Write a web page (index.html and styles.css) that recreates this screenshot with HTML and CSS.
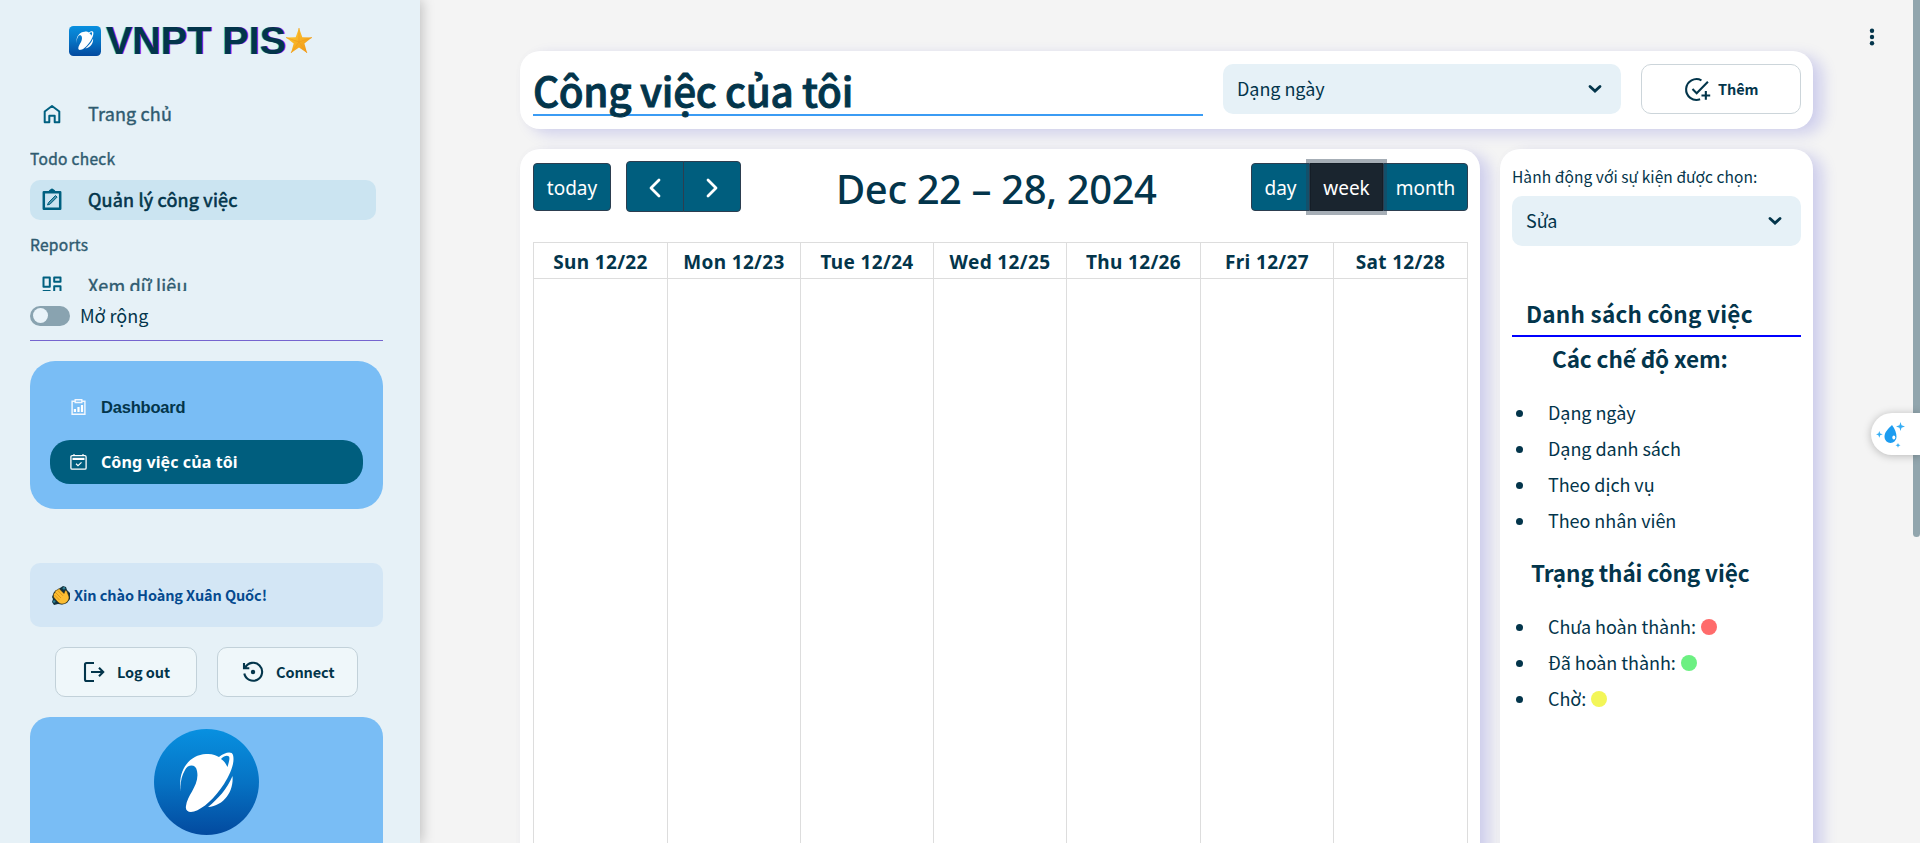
FILE: index.html
```html
<!DOCTYPE html>
<html lang="vi">
<head>
<meta charset="utf-8">
<title>VNPT PIS</title>
<link rel="stylesheet" href="styles.css">
</head>
<body>
<svg width="0" height="0" class="defs">
  <defs>
    <linearGradient id="blue" x1="0" y1="0" x2="0" y2="1"><stop offset="0" stop-color="#0890e0"/><stop offset=".5" stop-color="#0673c4"/><stop offset="1" stop-color="#034a9f"/></linearGradient>
    <linearGradient id="gold" x1="0" y1="0" x2="1" y2="1"><stop offset="0" stop-color="#ffd43a"/><stop offset="1" stop-color="#ef8f12"/></linearGradient>
    <symbol id="planet" viewBox="0 0 56 60">
      <path fill="#fff" d="M2 40C-2 20 9 3 27 2C33 1.500 37 3 40 5C46 0 53-1 54 3C56 10 52 21 45 32C36 46 24 57 15 59.500C10 61 6 59 7 54C8 43 21 33 18 19C17 12 9 12 6 18C2 25 1 32 2 40ZM42 7C46 10 47 12 48.500 15C50 10 51 6 50 4.500C48 3 45 4 42 7Z"/>
      <path fill="#fff" d="M53.500 24C55 39 45 54 29 55C39 47 48 37 53.500 24Z"/>
    </symbol>
  </defs>
</svg>
<div class="app">
  <aside class="sidebar">
    <div class="brand">
      <svg class="brand-logo" viewBox="0 0 32 30"><rect width="32" height="30" rx="4.500" fill="url(#blue)"/><use href="#planet" x="7" y="5" width="18" height="19"/></svg>
      <span class="brand-name">VNPT PIS</span>
      <svg class="brand-star" viewBox="0 0 26 26"><path fill="url(#gold)" d="M13 0l3.300 9.200 9.700.3-7.600 6 2.700 9.500-8.100-5.500L5 25l2.700-9.500L0 9.500l9.700-.3z"/><path fill="none" stroke="#f0a020" stroke-width=".8" d="M13 0v14M26 9.500L13 14M21 25l-8-11M5 25l8-11M0 9.500L13 14"/></svg>
    </div>
    <nav class="nav">
      <a class="nav-item">
        <svg class="ico" viewBox="0 0 24 24"><path d="M4.700 20.300V9.500L12 4l7.300 5.500v10.800h-4.600v-6.500H9.300v6.500z"/></svg>
        <span class="t-home">Trang chủ</span>
      </a>
      <div class="nav-label t-todo">Todo check</div>
      <a class="nav-item active">
        <svg class="ico bold" viewBox="0 0 24 24"><path d="M3.800 4.300h16.400v16.400H3.800zM9.500 3.500L12 1.800l2.500 1.700"/><path class="pen" d="M7.500 17l1-2.500 7-7 1.600 1.600-7 7z"/></svg>
        <span class="t-manage">Quản lý công việc</span>
      </a>
      <div class="nav-label t-reports">Reports</div>
      <a class="nav-item">
        <svg class="ico" viewBox="0 0 24 24"><path d="M3.500 3.500h6.300v9.300H3.500zM14.200 3.500h6.300v4.300h-6.300zM14.200 12.200h6.300v8.300h-6.300zM3.500 17h6.300v3.500H3.500z"/></svg>
        <span class="t-view">Xem dữ liệu</span>
      </a>
    </nav>
    <div class="expand"><span class="switch"></span><span class="t-expand">Mở rộng</span></div>
    <div class="menu">
      <a class="menu-item">
        <svg viewBox="0 0 16 16"><path fill="none" stroke="#f3f8fe" stroke-width="1.400" d="M4.500 2.200H1.600v13.100h12.800V2.200h-2.900M4.700.8h6.600v2.700H4.700z"/><path stroke="#fff" stroke-width="2.200" d="M4.400 13v-3M8 13V8M11.500 13V6"/></svg>
        <span class="t-dash">Dashboard</span>
      </a>
      <a class="menu-item selected">
        <svg viewBox="0 0 17 16"><rect x=".9" y="1.700" width="15.200" height="13.500" rx="1.200" fill="none" stroke="#fff" stroke-width="1.300"/><path fill="none" stroke="#fff" stroke-width="1.200" d="M4 0v2M13 0v2M6 9.800l2 1.900 3.500-3.300"/><path fill="#fff" d="M2.500 3.800h12v2.200h-12z"/></svg>
        <span class="t-mine">Công việc của tôi</span>
      </a>
    </div>
    <div class="greeting">
      <svg viewBox="0 0 18 19"><path fill="#12323f" d="M8 2l3-2 3 1 1 3 3 3v6l-3 4-5 1.500-4-.5-4 1L0 16l1-3-1-2 2-5z"/><path fill="#fbbd32" stroke="#3a2d10" stroke-width=".5" d="M1.500 8l1.500-1.500L3.500 4.500 5.500 4 7 2.500l5 5 1.500-3.500 1.500 1.500 2 5.500c0 4-3 7-7 7-3 0-5-3-8.500-7z"/><path stroke="#d98c12" stroke-width=".8" d="M3.500 6.500l5.500 5.500M5.800 4.500L11 9.800M2.500 9l5 5"/><circle cx="2.200" cy="15.500" r="1.300" fill="#2d8196"/><circle cx="12" cy="2.200" r="1.300" fill="#2d8196"/></svg>
      <span class="t-hello">Xin chào Hoàng Xuân Quốc!</span>
    </div>
    <div class="account">
      <button class="btn logout"><svg viewBox="0 0 24 24"><path d="M12 3H4.500Q3 3 3 4.500v15Q3 21 4.500 21H12M9 12h12M17 7.800l4.200 4.200-4.200 4.200"/></svg><span class="t-logout">Log out</span></button>
      <button class="btn connect"><svg viewBox="0 0 24 24"><path d="M4.200 7.500A9 9 0 1 1 3.300 13.500M3 3v5.200h5.300"/><circle cx="12" cy="12" r="2.200" class="dot"/></svg><span class="t-connect">Connect</span></button>
    </div>
    <div class="promo"><div class="planet-badge"><svg viewBox="0 0 56 60"><use href="#planet"/></svg></div></div>
  </aside>

  <main class="main">
    <header class="card head">
      <h1><span class="t-title">Công việc của tôi</span></h1>
      <div class="select"><span class="t-sel">Dạng ngày</span><svg viewBox="0 0 14 10"><path d="M2 2.500l5 4.600 5-4.600"/></svg></div>
      <button class="btn add"><svg viewBox="0 0 24 24"><path d="M15.800 3.200A10 10 0 1 0 14.500 21.400M7.200 11.500l4 4L22 4.500M20 13.500v8.400M15.800 17.700h8.400"/></svg><span class="t-add">Thêm</span></button>
    </header>
    <div class="columns">
      <section class="card calendar">
        <div class="toolbar">
          <div class="left">
            <button class="cal-btn today"><span class="t-today">today</span></button>
            <div class="arrows">
              <button class="cal-btn"><svg viewBox="0 0 14 20"><path d="M11 2L3 10l8 8"/></svg></button>
              <button class="cal-btn"><svg viewBox="0 0 14 20"><path d="M3 2l8 8-8 8"/></svg></button>
            </div>
          </div>
          <h2><span class="t-range">Dec 22 – 28, 2024</span></h2>
          <div class="views">
            <button class="cal-btn day"><span class="t-day">day</span></button>
            <button class="cal-btn week"><span class="t-week">week</span></button>
            <button class="cal-btn month"><span class="t-month">month</span></button>
          </div>
        </div>
        <div class="grid">
          <div class="col"><b>Sun 12/22</b></div><div class="col"><b>Mon 12/23</b></div><div class="col"><b>Tue 12/24</b></div><div class="col"><b>Wed 12/25</b></div><div class="col"><b>Thu 12/26</b></div><div class="col"><b>Fri 12/27</b></div><div class="col"><b>Sat 12/28</b></div>
        </div>
      </section>
      <section class="card side">
        <label><span class="t-label">Hành động với sự kiện được chọn:</span></label>
        <div class="select"><span class="t-edit">Sửa</span><svg viewBox="0 0 14 10"><path d="M2 2.500l5 4.600 5-4.600"/></svg></div>
        <h3 class="list-title"><span class="t-list">Danh sách công việc</span></h3>
        <h3 class="modes"><span class="t-modes">Các chế độ xem:</span></h3>
        <ul>
          <li><span>Dạng ngày</span></li>
          <li><span>Dạng danh sách</span></li>
          <li><span>Theo dịch vụ</span></li>
          <li><span>Theo nhân viên</span></li>
        </ul>
        <h3 class="status"><span class="t-status">Trạng thái công việc</span></h3>
        <ul>
          <li><span>Chưa hoàn thành:</span><i class="red"></i></li>
          <li><span>Đã hoàn thành:</span><i class="green"></i></li>
          <li><span>Chờ:</span><i class="yellow"></i></li>
        </ul>
      </section>
    </div>
  </main>
  <svg class="kebab" viewBox="0 0 6 18"><circle cx="3" cy="2.700" r="2.200"/><circle cx="3" cy="9" r="2.200"/><circle cx="3" cy="15.300" r="2.200"/></svg>
  <div class="scrollbar"></div>
  <div class="widget"><svg viewBox="0 0 30 26"><path fill="#1c9cf0" d="M16 3c3 4 4.500 8 4.500 12a6 6 0 0 1-12 0C8.500 10 12 7 16 3z"/><ellipse cx="17.800" cy="15.500" rx="1.500" ry="2" fill="#fff"/><path fill="#35aef5" d="M24.500 0l1 3.300L29 4.500l-3.500 1.200-1 3.300-1-3.300L20 4.500l3.500-1.200zM3.300 9l.9 2.400 2.600.9-2.600.9-.9 2.600-.9-2.600L0 12.300l2.400-.9zM22 21l.7 1.600 1.800.7-1.800.7-.7 1.800-.7-1.800-1.800-.7 1.800-.7z"/></svg></div>
</div>
</body>
</html>
```
FILE: styles.css
```css
* { box-sizing: border-box; }
body { margin: 0; width: 1920px; height: 843px; overflow: hidden; background: #f4f4f4; color: #03354b; font-family: "Noto Sans CJK SC", "Noto Sans", sans-serif; font-size: 18px; }
.defs { position: absolute; }
span, b { white-space: nowrap; }
h1, h2, h3, ul { margin: 0; padding: 0; font-weight: inherit; }
button { font: inherit; color: inherit; padding: 0; margin: 0; background: none; border: 0; }
.app { display: flex; width: 1920px; height: 843px; overflow: hidden; position: relative; }

.sidebar { width: 420px; height: 843px; padding: 26px 37px 0 30px; background: #e6f1f7; box-shadow: 2px 0 12px rgba(0,0,0,.22); flex: none; overflow: hidden; z-index: 1; }
.brand { display: flex; align-items: flex-start; height: 68px; padding-left: 39px; }
.brand-logo { width: 32px; height: 30px; }
.brand-name { font: bold 39.500px/28px "Liberation Sans", Arial, sans-serif; margin-left: 5px; text-shadow: 1px 0 #d22be0, -1px 0 #45dfe8; width: 179px; }
.brand-star { width: 26px; height: 26px; margin: 2px 0 0 1px; }
.nav { height: 197px; width: 346px; overflow: hidden; }
.nav-item { display: flex; align-items: center; height: 40px; padding-left: 10px; border-radius: 10px; color: #2f5b70; }
.nav-item span { margin-left: 24px; padding-bottom: 2px; font-size: 18px; letter-spacing: .15px; -webkit-text-stroke: .4px; }
.nav-item.active { background: #cbe4f1; color: #03354b; }
.ico { width: 24px; height: 24px; fill: none; stroke: #006080; stroke-width: 2; stroke-linejoin: round; }
.ico.bold { stroke-width: 2.500; }
.ico .pen { stroke-width: 1; fill: #4f93aa; }
.nav-label { height: 46px; line-height: 48px; font-size: 15.500px; letter-spacing: .3px; color: #2f5b70; -webkit-text-stroke: .4px; }
.expand { height: 50px; border-bottom: 1px solid #7565cf; display: flex; padding-top: 15px; }
.switch { width: 40px; height: 20px; border-radius: 10px; background: #89a3b0; padding: 2px 3px; }
.switch::before { content: ""; display: block; width: 15px; height: 15px; border-radius: 50%; background: #e9f3f9; }
.expand > span + span { line-height: 18px; margin-left: 10px; }
.menu { margin-top: 20px; height: 148px; padding: 24px 20px; border-radius: 25px; background: #79bdf5; }
.menu-item { display: flex; align-items: center; height: 44px; padding-left: 20px; border-radius: 20px; }
.menu-item svg { width: 17px; height: 16px; }
.menu-item span { margin-left: 14px; }
.menu-item.selected { margin-top: 11px; background: #005e7e; color: #fff; font-family: "Noto Sans", sans-serif; }
.greeting { margin-top: 54px; height: 64px; border-radius: 10px; background: #d3e6f5; display: flex; align-items: center; padding-left: 22px; color: #054a8f; font-weight: 700; }
.greeting svg { width: 18px; height: 19px; }
.greeting span { margin-left: 4px; padding-bottom: 2px; }
.account { display: flex; gap: 20px; margin: 20px 0 20px 25px; }
.btn { display: flex; align-items: center; height: 50px; border: 1px solid #c2d1d9; border-radius: 10px; background: #eff7fa; font-weight: 700; }
.btn svg { width: 24px; height: 24px; fill: none; stroke: #03354b; stroke-width: 2.100; flex: none; }
.btn .dot { fill: #03354b; stroke: none; }
.logout { width: 142px; padding-left: 26px; }
.connect { width: 141px; padding-left: 23px; }
.btn span { margin-left: 11px; padding-bottom: 2px; }
.promo { height: 150px; border-radius: 20px 20px 0 0; background: #79bdf5; padding: 12px 0 0 124px; }
.planet-badge { width: 105px; height: 106px; border-radius: 50%; background: linear-gradient(#0890e0, #0673c4 50%, #034a9f); padding: 23px 0 0 25px; }
.planet-badge svg { width: 56px; height: 60px; }

.main { padding: 51px 0 0 100px; width: 1393px; }
.card { background: #fff; border-radius: 20px; box-shadow: 10px 5px 15px rgba(0,0,200,.15), 0 0 10px rgba(0,0,0,.02); }
.head { height: 78px; padding: 13px 12px 0 13px; display: flex; gap: 20px; }
.head h1 { width: 670px; height: 52px; border-bottom: 2px solid #3b9cf4; line-height: 51px; }
.select { height: 50px; border-radius: 10px; background: #e6f1f7; display: flex; align-items: center; justify-content: space-between; padding: 0 19px 0 14px; }
.select span { padding-bottom: 2px; }
.select svg { width: 14px; height: 10px; fill: none; stroke: #03354b; stroke-width: 2.800; stroke-linecap: round; }
.head .select { width: 398px; }
.add { width: 160px; background: #fff; border-color: #ccd5da; padding-left: 43px; }
.add svg { width: 25px; height: 25px; stroke-width: 2; overflow: visible; }
.add span { margin-left: 8px; }
.columns { display: flex; gap: 20px; margin-top: 20px; }
.calendar { width: 960px; height: 720px; padding: 12px 12px 0 13px; font-family: "Noto Sans", sans-serif; }
.toolbar { display: grid; grid-template-columns: 303px 1fr 217px; height: 81px; align-items: start; }
.left { display: flex; align-items: flex-start; gap: 15px; }
.cal-btn { height: 48px; background: #005e7e; color: #fff; border: 1px solid #2c3e50; display: flex; align-items: center; justify-content: center; }
.cal-btn span { padding-top: 2px; }
.today { width: 78px; border-radius: 4px; margin-top: 2px; }
.arrows { display: flex; }
.arrows .cal-btn { width: 58px; height: 51px; border-radius: 4px 0 0 4px; padding-top: 3px; }
.arrows .cal-btn + .cal-btn { border-radius: 0 4px 4px 0; margin-left: -1px; }
.arrows svg { width: 14px; height: 20px; fill: none; stroke: #fff; stroke-width: 2.800; stroke-linejoin: round; stroke-linecap: round; }
.calendar h2 { line-height: 55px; }
.views { display: flex; margin-top: 2px; }
.day { width: 59px; border-radius: 4px 0 0 4px; }
.week { width: 73px; background: #1a252f; border-color: #151e27; box-shadow: 0 0 0 4px rgba(44,62,80,.42); z-index: 1; }
.month { width: 85px; border-radius: 0 4px 4px 0; }
.grid { display: grid; grid-template-columns: 133px 133px 133px 133px 134px 133px 1fr; border: 1px solid #ddd; height: 640px; }
.col + .col { border-left: 1px solid #ddd; }
.col b { display: flex; height: 36px; padding-top: 2px; justify-content: center; align-items: center; border-bottom: 1px solid #ddd; font-size: 19px; letter-spacing: .35px; }
.side { width: 313px; height: 720px; padding: 12px; }
.side label { display: block; height: 35px; line-height: 28px; }
.side h3 { font-weight: 700; }
.list-title { margin-top: 50px; height: 41px; line-height: 35px; border-bottom: 2px solid #0000ff; padding-left: 14px; }
.modes { height: 58px; line-height: 43px; padding-left: 40px; }
.status { height: 70px; line-height: 66px; padding-left: 19px; }
ul { list-style: none; }
li { height: 36px; display: flex; align-items: center; }
li::before { content: ""; width: 7px; height: 7px; border-radius: 50%; background: #03354b; margin: 0 25px 0 4px; }
li span { padding-bottom: 2px; }
li i { width: 16px; height: 16px; border-radius: 50%; margin-left: 5px; }
.red { background: #ff6b6b; }
.green { background: #6cf082; }
.yellow { background: #f3f658; }
.kebab { position: absolute; left: 1869px; top: 27.500px; width: 6px; height: 18px; fill: #03354b; }
.scrollbar { position: absolute; right: 0; top: 0; width: 7px; height: 537px; background: #91a5ad; border-radius: 0 0 4px 4px; }
.widget { position: absolute; right: 0; top: 413px; width: 49px; height: 42px; border-radius: 21px 0 0 21px; background: #fff; box-shadow: 0 1px 8px rgba(0,0,0,.25); padding: 9px 0 0 5px; }
.widget svg { width: 30px; height: 26px; }

/* Type sizes */
.nav-item .t-manage { letter-spacing: .2px; -webkit-text-stroke: .6px; }
.t-expand { font-size: 18px; }
.t-dash { font: bold 16.500px "Liberation Sans", Arial, sans-serif; letter-spacing: -.2px; padding-top: 1px; }
.t-mine { font-size: 16px; font-weight: 700; letter-spacing: .1px; }
.t-hello, .t-logout, .t-connect, .t-add { font-size: 14.500px; letter-spacing: -.1px; }
.t-title { font-size: 40.500px; font-weight: 500; letter-spacing: -.35px; -webkit-text-stroke: .9px; }
.t-sel, .t-edit, li span { font-size: 18px; letter-spacing: -.05px; }
.t-today, .t-day, .t-week, .t-month { font-size: 19px; }
.t-range { font-size: 40px; font-weight: 500; letter-spacing: -.4px; }
.t-label { font-size: 15.500px; letter-spacing: .08px; }
.t-list, .t-modes, .t-status { font-size: 22.500px; letter-spacing: -.1px; }
.t-list { letter-spacing: .25px; }
```
